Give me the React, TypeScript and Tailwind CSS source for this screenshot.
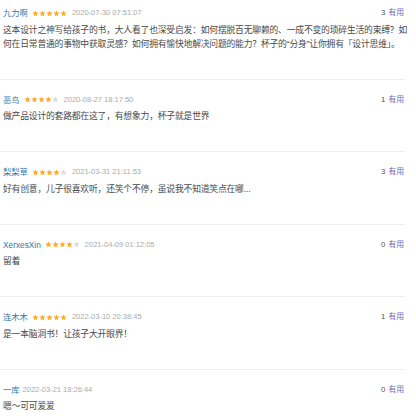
import React from "react";

type Review = {
  name: string;
  stars: number;
  date: string;
  useful: number;
  text: string;
};

const reviews: Review[] = [
  {
    name: "九力啊",
    stars: 5,
    date: "2020-07-30 07:51:07",
    useful: 3,
    text: "这本设计之神写给孩子的书，大人看了也深受启发：如何摆脱百无聊赖的、一成不变的琐碎生活的束缚？如何在日常普通的事物中获取灵感？如何拥有愉快地解决问题的能力？杯子的“分身”让你拥有「设计思维」。",
  },
  {
    name: "恶鸟",
    stars: 4,
    date: "2020-08-27 18:17:50",
    useful: 1,
    text: "做产品设计的套路都在这了，有想象力，杯子就是世界",
  },
  {
    name: "梨梨草",
    stars: 4,
    date: "2021-03-31 21:11:53",
    useful: 3,
    text: "好有创意，儿子很喜欢听，还笑个不停，虽说我不知道笑点在哪...",
  },
  {
    name: "XerxesXin",
    stars: 4,
    date: "2021-04-09 01:12:05",
    useful: 0,
    text: "留着",
  },
  {
    name: "连木木",
    stars: 5,
    date: "2022-03-10 20:38:45",
    useful: 1,
    text: "是一本脑洞书！让孩子大开眼界！",
  },
  {
    name: "一库",
    stars: 0,
    date: "2022-03-21 18:26:44",
    useful: 0,
    text: "嗯～可可爱爱",
  },
];

function Star({ filled }: { filled: boolean }) {
  return (
    <svg width="7" height="7" viewBox="0 0 24 24" className="block">
      <polygon
        points="12,1.5 15.1,8.1 22.5,9 17,14 18.5,21.5 12,17.8 5.5,21.5 7,14 1.5,9 8.9,8.1"
        fill={filled ? "#ffac2d" : "#dcdcdc"}
      />
    </svg>
  );
}

export default function App() {
  return (
    <div
      className="w-[416px] h-[419px] overflow-hidden bg-white"
      style={{ fontFamily: '"Liberation Sans", "Noto Sans CJK SC", sans-serif' }}
    >
      {reviews.map((r, i) => (
        <div
          key={i}
          className={`w-[405px] border-b border-[#eeeeee] pl-[3px] pb-[28px] ${
            i === 0 ? "pt-[6px]" : "pt-[13px]"
          }`}
        >
          <div className="flex h-[14px] items-center justify-between pr-[1px]">
            <div className="flex items-center">
              <span className="text-[8.3px] leading-[14px] text-[#3377aa]">{r.name}</span>
              {r.stars > 0 && (
                <span className="ml-[4px] flex items-center">
                  {[0, 1, 2, 3, 4].map((s) => (
                    <Star key={s} filled={s < r.stars} />
                  ))}
                </span>
              )}
              <span
                className={`${r.stars > 0 ? "ml-[5px]" : "ml-[3px]"} text-[7.5px] leading-[14px] text-[#aaaaaa]`}
              >
                {r.date}
              </span>
            </div>
            <div className="flex items-center text-[7.8px] leading-[14px]">
              <span className="text-[#555555]">{r.useful}</span>
              <span className="ml-[3px] text-[#6a6ab5]">有用</span>
            </div>
          </div>
          <p className="mt-[2.5px] w-[410px] text-[8.8px] leading-[14px] tracking-[-0.2px] text-[#494949]">
            {r.text}
          </p>
        </div>
      ))}
    </div>
  );
}
